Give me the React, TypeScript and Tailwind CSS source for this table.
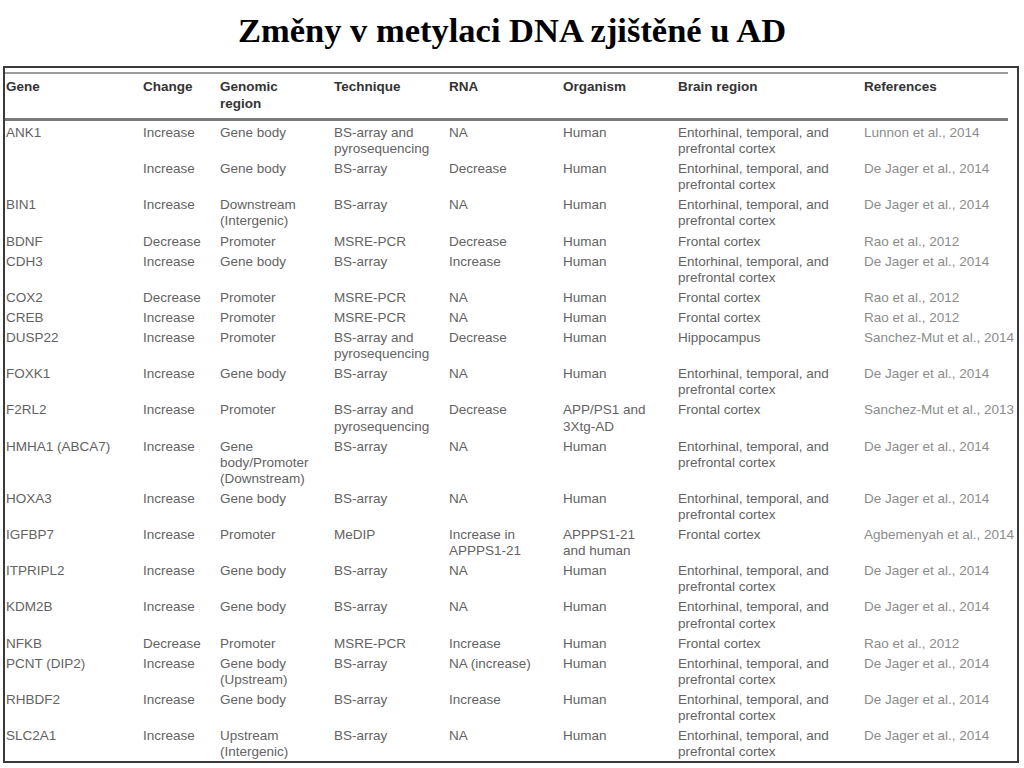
const rows: string[][] = [
  ['ANK1', 'Increase', 'Gene body', 'BS-array and\npyrosequencing', 'NA', 'Human', 'Entorhinal, temporal, and\nprefrontal cortex', 'Lunnon et al., 2014'],
  ['', 'Increase', 'Gene body', 'BS-array', 'Decrease', 'Human', 'Entorhinal, temporal, and\nprefrontal cortex', 'De Jager et al., 2014'],
  ['BIN1', 'Increase', 'Downstream\n(Intergenic)', 'BS-array', 'NA', 'Human', 'Entorhinal, temporal, and\nprefrontal cortex', 'De Jager et al., 2014'],
  ['BDNF', 'Decrease', 'Promoter', 'MSRE-PCR', 'Decrease', 'Human', 'Frontal cortex', 'Rao et al., 2012'],
  ['CDH3', 'Increase', 'Gene body', 'BS-array', 'Increase', 'Human', 'Entorhinal, temporal, and\nprefrontal cortex', 'De Jager et al., 2014'],
  ['COX2', 'Decrease', 'Promoter', 'MSRE-PCR', 'NA', 'Human', 'Frontal cortex', 'Rao et al., 2012'],
  ['CREB', 'Increase', 'Promoter', 'MSRE-PCR', 'NA', 'Human', 'Frontal cortex', 'Rao et al., 2012'],
  ['DUSP22', 'Increase', 'Promoter', 'BS-array and\npyrosequencing', 'Decrease', 'Human', 'Hippocampus', 'Sanchez-Mut et al., 2014'],
  ['FOXK1', 'Increase', 'Gene body', 'BS-array', 'NA', 'Human', 'Entorhinal, temporal, and\nprefrontal cortex', 'De Jager et al., 2014'],
  ['F2RL2', 'Increase', 'Promoter', 'BS-array and\npyrosequencing', 'Decrease', 'APP/PS1 and\n3Xtg-AD', 'Frontal cortex', 'Sanchez-Mut et al., 2013'],
  ['HMHA1 (ABCA7)', 'Increase', 'Gene\nbody/Promoter\n(Downstream)', 'BS-array', 'NA', 'Human', 'Entorhinal, temporal, and\nprefrontal cortex', 'De Jager et al., 2014'],
  ['HOXA3', 'Increase', 'Gene body', 'BS-array', 'NA', 'Human', 'Entorhinal, temporal, and\nprefrontal cortex', 'De Jager et al., 2014'],
  ['IGFBP7', 'Increase', 'Promoter', 'MeDIP', 'Increase in\nAPPPS1-21', 'APPPS1-21\nand human', 'Frontal cortex', 'Agbemenyah et al., 2014'],
  ['ITPRIPL2', 'Increase', 'Gene body', 'BS-array', 'NA', 'Human', 'Entorhinal, temporal, and\nprefrontal cortex', 'De Jager et al., 2014'],
  ['KDM2B', 'Increase', 'Gene body', 'BS-array', 'NA', 'Human', 'Entorhinal, temporal, and\nprefrontal cortex', 'De Jager et al., 2014'],
  ['NFKB', 'Decrease', 'Promoter', 'MSRE-PCR', 'Increase', 'Human', 'Frontal cortex', 'Rao et al., 2012'],
  ['PCNT (DIP2)', 'Increase', 'Gene body\n(Upstream)', 'BS-array', 'NA (increase)', 'Human', 'Entorhinal, temporal, and\nprefrontal cortex', 'De Jager et al., 2014'],
  ['RHBDF2', 'Increase', 'Gene body', 'BS-array', 'Increase', 'Human', 'Entorhinal, temporal, and\nprefrontal cortex', 'De Jager et al., 2014'],
  ['SLC2A1', 'Increase', 'Upstream\n(Intergenic)', 'BS-array', 'NA', 'Human', 'Entorhinal, temporal, and\nprefrontal cortex', 'De Jager et al., 2014'],
]

const headers = ['Gene', 'Change', 'Genomic\nregion', 'Technique', 'RNA', 'Organism', 'Brain region', 'References']

const cols = 'grid grid-cols-[137px_77px_114px_115px_114px_115px_186px_1fr]'

export default function App() {
  return (
    <div className="w-[1024px] h-[768px] bg-white overflow-hidden">
      {/* Slide title */}
      <h1
        className="h-[66px] pt-[12px] text-center text-[34.5px] leading-[36px] font-bold text-black"
        style={{ fontFamily: '"Liberation Serif", "Times New Roman", serif' }}
      >
        Změny v metylaci DNA zjištěné u AD
      </h1>

      {/* Table image */}
      <div
        className="ml-[3px] w-[1016px] h-[697px] border-2 border-[#3a3a3a] overflow-hidden"
        style={{ fontFamily: '"Liberation Sans", Arial, sans-serif' }}
      >
        <div className="mt-[4px] mr-[9px] h-[2px] bg-[#9a9a9a]" />

        <div className={`${cols} pl-[1px] pt-[4px] pb-[6px] text-[13.5px] leading-[17px] font-bold text-[#333]`}>
          {headers.map((h, i) => (
            <div key={i} className="whitespace-pre-line">{h}</div>
          ))}
        </div>

        <div className="mr-[9px] h-[3px] bg-[#7a7a7a]" />

        {rows.map((r, ri) => (
          <div key={ri} className={`${cols} pl-[1px] pt-[4px] text-[13.5px] leading-[16.1px] text-[#636363]`}>
            {r.map((c, ci) => (
              <div
                key={ci}
                className={ci === 7 ? 'whitespace-nowrap text-[#8c8c8c]' : 'whitespace-pre-line'}
              >
                {c}
              </div>
            ))}
          </div>
        ))}
      </div>
    </div>
  )
}
